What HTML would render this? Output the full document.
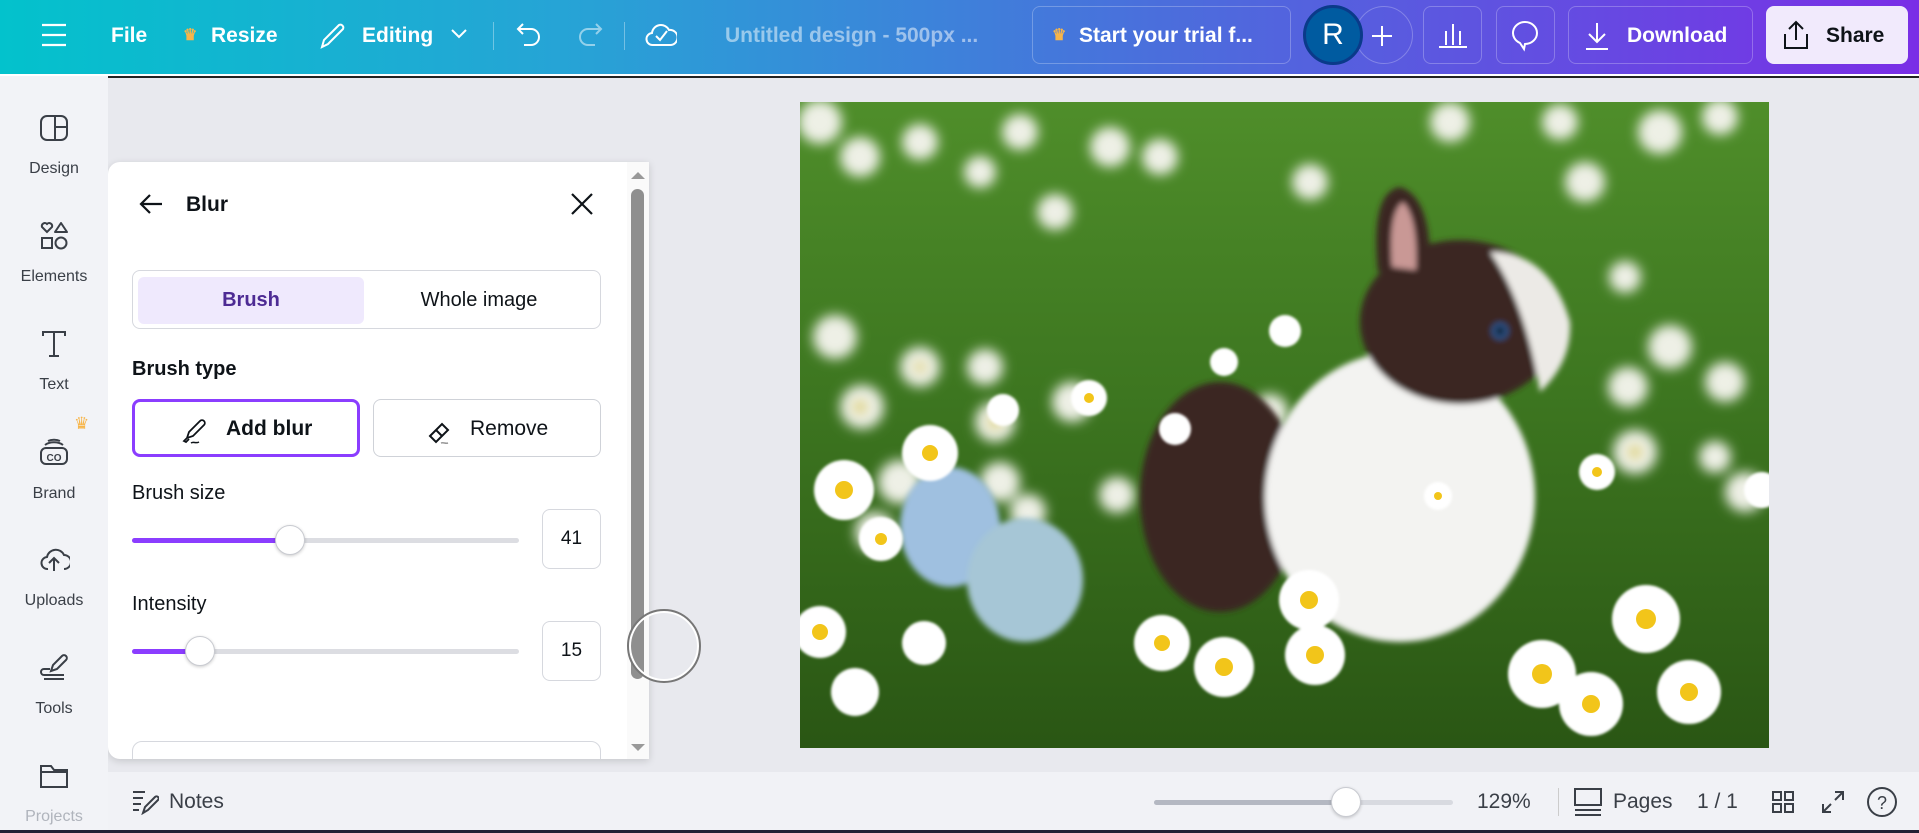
<!DOCTYPE html>
<html><head><meta charset="utf-8"><style>
*{box-sizing:border-box;margin:0;padding:0}
html{overflow:hidden}
body{width:1919px;height:833px;overflow:hidden;font-family:"Liberation Sans",sans-serif;background:#e8e9ee;position:relative;color:#0e1318}
.abs{position:absolute}
.top{left:0;top:0;width:1919px;height:74px;background:linear-gradient(90deg,#03c2cc 0%,#27a3d6 30%,#4a6fdc 60%,#7a2ee6 100%);color:#fff}
.tt{position:absolute;top:23px;font-size:21px;font-weight:bold;line-height:26px}
.tbtn{position:absolute;top:6px;height:58px;border:1px solid rgba(255,255,255,.25);border-radius:8px}
.side{left:0;top:76px;width:108px;height:754px;background:#f2f3f7;z-index:3;overflow:hidden}
.sl{position:absolute;left:0;width:108px;text-align:center;font-size:16px;color:#3a3f47}
.si{position:absolute;left:38px;width:32px;height:32px}
.panel{left:108px;top:162px;width:541px;height:597px;background:#fff;border-radius:12px 0 0 12px;box-shadow:0 2px 8px rgba(0,0,0,.15);overflow:hidden}
.bottom{left:0;top:772px;width:1919px;height:58px;background:#f1f2f6}
</style></head><body>
<div class="abs top">
<svg class="abs" style="left:40px;top:22px" width="28" height="26"><path d="M2 3h24M2 13h24M2 23h24" stroke="#fff" stroke-width="2.2"/></svg>
<div class="tt" style="left:111px">File</div>
<div class="tt" style="left:183px;color:#f7b54a;font-size:16px">♛</div>
<div class="tt" style="left:211px">Resize</div>
<svg class="abs" style="left:318px;top:20px" width="30" height="30"><path d="M4 27l2-7L21 5a3 3 0 014 4L10 24z" fill="none" stroke="#fff" stroke-width="2"/></svg>
<div class="tt" style="left:362px">Editing</div>
<svg class="abs" style="left:450px;top:28px" width="18" height="12"><path d="M2 2l7 7 7-7" fill="none" stroke="#fff" stroke-width="2"/></svg>
<div class="abs" style="left:493px;top:22px;width:1px;height:28px;background:rgba(255,255,255,.35)"></div>
<svg class="abs" style="left:514px;top:20px" width="30" height="30"><path d="M9 4L4 9l5 5M4 9h13a8 8 0 010 16h-7" fill="none" stroke="#fff" stroke-width="2"/></svg>
<svg class="abs" style="left:575px;top:20px" width="30" height="30"><path d="M21 4l5 5-5 5M26 9H13a8 8 0 000 16h7" fill="none" stroke="rgba(255,255,255,.5)" stroke-width="2"/></svg>
<div class="abs" style="left:624px;top:22px;width:1px;height:28px;background:rgba(255,255,255,.35)"></div>
<svg class="abs" style="left:645px;top:18px" width="32" height="32"><path d="M8 27a6 6 0 01-1-12 9 9 0 0117-3 7 7 0 012 15z" fill="none" stroke="#fff" stroke-width="2"/><path d="M11 18l4 4 7-9" fill="none" stroke="#fff" stroke-width="2"/></svg>
<div class="tt" style="left:725px;font-weight:bold;color:rgba(255,255,255,.5)">Untitled design - 500px ...</div>
<div class="tbtn" style="left:1032px;width:259px"></div>
<div class="tt" style="left:1052px;color:#f7b54a;font-size:16px">♛</div>
<div class="tt" style="left:1079px">Start your trial f...</div>
<div class="abs" style="left:1355px;top:6px;width:58px;height:58px;border:1px solid rgba(255,255,255,.25);border-radius:50%"></div>
<svg class="abs" style="left:1370px;top:24px" width="24" height="24"><path d="M12 2v20M2 12h20" stroke="#fff" stroke-width="2"/></svg>
<div class="abs" style="left:1303px;top:5px;width:60px;height:60px;border-radius:50%;background:#005ba0;border:3px solid #0a3a8a;text-align:center;line-height:54px;font-size:30px">R</div>
<div class="tbtn" style="left:1423px;width:59px"></div>
<svg class="abs" style="left:1437px;top:20px" width="32" height="30"><path d="M2 27h28M9 25V11M16 25V4M23 25V11" stroke="#fff" stroke-width="2"/></svg>
<div class="tbtn" style="left:1496px;width:59px"></div>
<svg class="abs" style="left:1509px;top:19px" width="32" height="34"><path d="M16 3a12 11 0 00-5 21l4 6 1-5a12 11 0 000-22z" fill="none" stroke="#fff" stroke-width="2"/></svg>
<div class="tbtn" style="left:1568px;width:185px"></div>
<svg class="abs" style="left:1582px;top:20px" width="30" height="32"><path d="M15 3v19M7 14l8 8 8-8M4 29h22" fill="none" stroke="#fff" stroke-width="2"/></svg>
<div class="tt" style="left:1627px">Download</div>
<div class="abs" style="left:1766px;top:6px;width:142px;height:58px;background:#f1eafc;border-radius:8px"></div>
<svg class="abs" style="left:1781px;top:19px" width="30" height="32"><path d="M15 21V3M8 10l7-7 7 7M4 15v14h22V15" fill="none" stroke="#0e1318" stroke-width="2"/></svg>
<div class="tt" style="left:1826px;color:#0e1318">Share</div>
</div>
<div class="abs" style="left:0;top:74px;width:1919px;height:2px;background:#fff"></div>
<div class="abs" style="left:0;top:76px;width:1919px;height:2px;background:#222"></div>

<div class="abs side">
<svg class="si" style="top:36px" viewBox="0 0 32 32"><rect x="3" y="4" width="26" height="24" rx="6" fill="none" stroke="#3a3f47" stroke-width="2"/><path d="M17 4v24M17 15h12" stroke="#3a3f47" stroke-width="2"/></svg>
<div class="sl" style="top:84px">Design</div>
<svg class="si" style="top:144px" viewBox="0 0 32 32"><path d="M9 12l-5-5a3 3 0 015-3 3 3 0 015 3z" fill="none" stroke="#3a3f47" stroke-width="2"/><path d="M23 3l6 9H17z" fill="none" stroke="#3a3f47" stroke-width="2" stroke-linejoin="round"/><rect x="4" y="18" width="10" height="10" fill="none" stroke="#3a3f47" stroke-width="2"/><circle cx="23" cy="23" r="5.5" fill="none" stroke="#3a3f47" stroke-width="2"/></svg>
<div class="sl" style="top:192px">Elements</div>
<svg class="si" style="top:252px" viewBox="0 0 32 32"><path d="M5 8V4h22v4M16 4v24M11 28h10" fill="none" stroke="#3a3f47" stroke-width="2"/></svg>
<div class="sl" style="top:300px">Text</div>
<div class="abs" style="left:74px;top:338px;color:#f7b54a;font-size:17px">♛</div>
<svg class="si" style="top:360px" viewBox="0 0 32 32"><rect x="3" y="12" width="26" height="16" rx="5" fill="none" stroke="#3a3f47" stroke-width="2"/><path d="M7 9a12 8 0 0118 0M10 5a9 5 0 0112 0" fill="none" stroke="#3a3f47" stroke-width="2"/><text x="16" y="25" font-size="10" text-anchor="middle" font-family="Liberation Sans" font-weight="bold" fill="#3a3f47">CO</text></svg>
<div class="sl" style="top:409px">Brand</div>
<svg class="si" style="top:467px" viewBox="0 0 32 32"><path d="M10 26a6 6 0 01-1-12 9 9 0 0117-2 7 7 0 010 14" fill="none" stroke="#3a3f47" stroke-width="2"/><path d="M16 28V16M11 20l5-5 5 5" fill="none" stroke="#3a3f47" stroke-width="2"/></svg>
<div class="sl" style="top:516px">Uploads</div>
<svg class="si" style="top:575px" viewBox="0 0 32 32"><path d="M13 20l2-6 9-9a2.5 2.5 0 014 4l-9 9z" fill="none" stroke="#3a3f47" stroke-width="2"/><path d="M12 18H6a3 3 0 000 6h20M6 28h20" fill="none" stroke="#3a3f47" stroke-width="2"/></svg>
<div class="sl" style="top:624px">Tools</div>
<svg class="si" style="top:683px" viewBox="0 0 32 32"><path d="M3 7h10l3 4h13v17H3z" fill="none" stroke="#3a3f47" stroke-width="2"/><path d="M3 13h26" stroke="#3a3f47" stroke-width="2"/></svg>
<div class="sl" style="top:732px;color:#b0b4bc">Projects</div>
</div>

<div class="abs panel">
<svg class="abs" style="left:30px;top:30px" width="26" height="24"><path d="M24 12H3M12 3l-9 9 9 9" fill="none" stroke="#0e1318" stroke-width="2.2"/></svg>
<div class="abs" style="left:78px;top:31px;font-size:21px;font-weight:bold">Blur</div>
<svg class="abs" style="left:462px;top:30px" width="24" height="24"><path d="M2 2l20 20M22 2L2 22" stroke="#0e1318" stroke-width="2.2"/></svg>
<div class="abs" style="left:24px;top:108px;width:469px;height:59px;border:1px solid #d6d8de;border-radius:8px"></div>
<div class="abs" style="left:30px;top:115px;width:226px;height:47px;background:#efe9fd;border-radius:6px;text-align:center;line-height:47px;font-size:20px;font-weight:bold;color:#4d2b94">Brush</div>
<div class="abs" style="left:256px;top:115px;width:230px;height:47px;text-align:center;line-height:47px;font-size:20px">Whole image</div>
<div class="abs" style="left:24px;top:196px;font-size:20px;font-weight:bold">Brush type</div>
<div class="abs" style="left:24px;top:237px;width:228px;height:58px;border:3px solid #8b3dff;border-radius:8px"></div>
<svg class="abs" style="left:73px;top:254px" width="30" height="30"><path d="M6 22l2-6 11-11a2.5 2.5 0 014 4L12 20z M6 22l-3 3 2 1 3-3" fill="none" stroke="#0e1318" stroke-width="1.8"/><path d="M10 27c3-2 4 1 8-1" fill="none" stroke="#0e1318" stroke-width="1.5"/></svg>
<div class="abs" style="left:118px;top:255px;font-size:21px;font-weight:bold">Add blur</div>
<div class="abs" style="left:265px;top:237px;width:228px;height:58px;border:1px solid #cfd2d8;border-radius:8px"></div>
<svg class="abs" style="left:318px;top:254px" width="30" height="30"><path d="M4 20l12-12 6 6-12 12z M10 14l6 6" fill="none" stroke="#0e1318" stroke-width="2"/><path d="M15 27c3-1 4 1 7 0" stroke="#999" fill="none" stroke-width="1.5"/></svg>
<div class="abs" style="left:362px;top:255px;font-size:21px">Remove</div>
<div class="abs" style="left:24px;top:320px;font-size:20px">Brush size</div>
<div class="abs" style="left:24px;top:376px;width:387px;height:5px;background:#dcdde2;border-radius:3px"></div>
<div class="abs" style="left:24px;top:376px;width:158px;height:5px;background:#8b3dff;border-radius:3px"></div>
<div class="abs" style="left:167px;top:363px;width:30px;height:30px;border-radius:50%;background:#fff;border:1px solid #c9cbd1;box-shadow:0 1px 3px rgba(0,0,0,.2)"></div>
<div class="abs" style="left:434px;top:347px;width:59px;height:60px;border:1px solid #d6d8de;border-radius:8px;text-align:center;line-height:58px;font-size:19px">41</div>
<div class="abs" style="left:24px;top:431px;font-size:20px">Intensity</div>
<div class="abs" style="left:24px;top:487px;width:387px;height:5px;background:#dcdde2;border-radius:3px"></div>
<div class="abs" style="left:24px;top:487px;width:68px;height:5px;background:#8b3dff;border-radius:3px"></div>
<div class="abs" style="left:77px;top:474px;width:30px;height:30px;border-radius:50%;background:#fff;border:1px solid #c9cbd1;box-shadow:0 1px 3px rgba(0,0,0,.2)"></div>
<div class="abs" style="left:434px;top:459px;width:59px;height:60px;border:1px solid #d6d8de;border-radius:8px;text-align:center;line-height:58px;font-size:19px">15</div>
<div class="abs" style="left:24px;top:579px;width:469px;height:40px;border:1px solid #d6d8de;border-radius:10px"></div>
<div class="abs" style="left:519px;top:0;width:22px;height:597px;background:#fafafa"></div>
<div class="abs" style="left:523px;top:10px;width:0;height:0;border-left:7px solid transparent;border-right:7px solid transparent;border-bottom:7px solid #999"></div>
<div class="abs" style="left:523px;top:27px;width:13px;height:490px;background:#8f8f8f;border-radius:7px"></div>
<div class="abs" style="left:523px;top:582px;width:0;height:0;border-left:7px solid transparent;border-right:7px solid transparent;border-top:7px solid #999"></div>
</div>
<div class="abs" style="left:627px;top:609px;width:74px;height:74px;border-radius:50%;border:2px solid #777;box-shadow:inset 0 0 0 2px #fff"></div>

<svg class="abs" style="left:800px;top:102px" width="969" height="646" viewBox="0 0 969 646">
<defs>
<filter id="b6"><feGaussianBlur stdDeviation="6"/></filter>
<filter id="b3"><feGaussianBlur stdDeviation="3"/></filter>
<filter id="b1"><feGaussianBlur stdDeviation="1.2"/></filter>
<linearGradient id="g" x1="0" y1="0" x2="0" y2="1"><stop offset="0" stop-color="#4f8e2a"/><stop offset=".45" stop-color="#3d7620"/><stop offset="1" stop-color="#2a5614"/></linearGradient>
</defs>
<rect width="969" height="646" fill="url(#g)"/>
<g fill="#eef0e6" filter="url(#b6)">
<circle cx="20" cy="20" r="22"/><circle cx="60" cy="55" r="20"/><circle cx="120" cy="40" r="18"/><circle cx="180" cy="70" r="16"/><circle cx="220" cy="30" r="18"/><circle cx="310" cy="45" r="20"/><circle cx="360" cy="55" r="18"/><circle cx="255" cy="110" r="18"/><circle cx="510" cy="80" r="18"/><circle cx="650" cy="20" r="20"/><circle cx="760" cy="20" r="18"/><circle cx="785" cy="80" r="20"/><circle cx="860" cy="30" r="22"/><circle cx="920" cy="15" r="18"/><circle cx="825" cy="175" r="16"/>
<circle cx="35" cy="235" r="22"/><circle cx="62" cy="305" r="22"/><circle cx="120" cy="265" r="20"/><circle cx="185" cy="265" r="18"/><circle cx="195" cy="320" r="20"/><circle cx="272" cy="300" r="20"/><circle cx="100" cy="380" r="22"/><circle cx="140" cy="400" r="20"/><circle cx="200" cy="380" r="20"/><circle cx="228" cy="410" r="18"/><circle cx="75" cy="430" r="20"/><circle cx="317" cy="393" r="18"/><circle cx="440" cy="320" r="18"/><circle cx="470" cy="310" r="18"/>
<circle cx="870" cy="245" r="22"/><circle cx="925" cy="280" r="20"/><circle cx="828" cy="285" r="20"/><circle cx="835" cy="350" r="22"/><circle cx="945" cy="390" r="20"/><circle cx="915" cy="355" r="16"/>
</g>
<g filter="url(#b6)" fill="#d8c860"><circle cx="60" cy="305" r="6"/><circle cx="120" cy="265" r="5"/><circle cx="195" cy="320" r="6"/><circle cx="835" cy="350" r="6"/></g>
<g filter="url(#b3)">
<ellipse cx="420" cy="395" rx="80" ry="115" fill="#3a2620"/>
<ellipse cx="600" cy="395" rx="135" ry="145" fill="#f3f3f1"/>
<ellipse cx="660" cy="220" rx="100" ry="82" fill="#3b2520"/>
<path d="M578 170 Q570 90 600 85 Q632 95 630 170z" fill="#3b2520"/>
<path d="M592 165 Q588 110 603 100 Q618 115 616 168z" fill="#c99895"/>
<path d="M690 150 Q750 150 770 220 Q772 260 740 290 Q725 200 690 150z" fill="#eceae6"/>
<circle cx="700" cy="229" r="9" fill="#2c4f80"/><circle cx="700" cy="229" r="4" fill="#0c1a2a"/>
<ellipse cx="150" cy="425" rx="50" ry="60" fill="#9fc0e0"/>
<ellipse cx="225" cy="478" rx="58" ry="62" fill="#a6c6d6"/>
</g>
<g fill="#fff" filter="url(#b1)">
<circle cx="44" cy="388" r="30"/><circle cx="130" cy="351" r="28"/><circle cx="81" cy="437" r="22"/><circle cx="124" cy="541" r="22"/><circle cx="509" cy="498" r="30"/><circle cx="515" cy="553" r="30"/><circle cx="424" cy="565" r="30"/><circle cx="742" cy="572" r="34"/><circle cx="791" cy="602" r="32"/><circle cx="846" cy="517" r="34"/><circle cx="889" cy="590" r="32"/><circle cx="638" cy="394" r="14"/><circle cx="797" cy="370" r="18"/><circle cx="962" cy="388" r="18"/><circle cx="362" cy="541" r="28"/><circle cx="289" cy="296" r="18"/><circle cx="203" cy="308" r="16"/><circle cx="375" cy="327" r="16"/><circle cx="424" cy="260" r="14"/><circle cx="485" cy="229" r="16"/><circle cx="20" cy="530" r="26"/><circle cx="55" cy="590" r="24"/>
</g>
<g fill="#f2c51a">
<circle cx="44" cy="388" r="9"/><circle cx="130" cy="351" r="8"/><circle cx="81" cy="437" r="6"/><circle cx="509" cy="498" r="9"/><circle cx="515" cy="553" r="9"/><circle cx="424" cy="565" r="9"/><circle cx="742" cy="572" r="10"/><circle cx="791" cy="602" r="9"/><circle cx="846" cy="517" r="10"/><circle cx="889" cy="590" r="9"/><circle cx="638" cy="394" r="4"/><circle cx="797" cy="370" r="5"/><circle cx="362" cy="541" r="8"/><circle cx="289" cy="296" r="5"/><circle cx="20" cy="530" r="8"/>
</g>
</svg>

<div class="abs bottom">
<svg class="abs" style="left:131px;top:17px" width="28" height="26"><path d="M2 3h12M2 9h10M2 15h8M2 21h6" stroke="#3a3f47" stroke-width="2"/><path d="M12 24l2-6 10-10a2 2 0 013 3L17 21z" fill="none" stroke="#3a3f47" stroke-width="2"/></svg>
<div class="abs" style="left:169px;top:18px;font-size:21px;color:#3a3f47">Notes</div>
<div class="abs" style="left:1154px;top:28px;width:299px;height:5px;background:#d8dae0;border-radius:3px"></div>
<div class="abs" style="left:1154px;top:28px;width:192px;height:5px;background:#b4b8c2;border-radius:3px"></div>
<div class="abs" style="left:1331px;top:15px;width:30px;height:30px;border-radius:50%;background:#fff;border:1px solid #c9cbd1;box-shadow:0 1px 3px rgba(0,0,0,.2)"></div>
<div class="abs" style="left:1477px;top:18px;font-size:21px;color:#3a3f47">129%</div>
<div class="abs" style="left:1558px;top:16px;width:1px;height:28px;background:#ccc"></div>
<svg class="abs" style="left:1573px;top:15px" width="30" height="30"><rect x="2" y="2" width="26" height="16" fill="none" stroke="#3a3f47" stroke-width="2"/><path d="M2 23h26M2 28h26" stroke="#3a3f47" stroke-width="2"/></svg>
<div class="abs" style="left:1613px;top:18px;font-size:21px;color:#3a3f47">Pages</div>
<div class="abs" style="left:1697px;top:18px;font-size:21px;color:#3a3f47">1 / 1</div>
<svg class="abs" style="left:1771px;top:18px" width="24" height="24"><g fill="none" stroke="#3a3f47" stroke-width="2"><rect x="2" y="2" width="8" height="8"/><rect x="14" y="2" width="8" height="8"/><rect x="2" y="14" width="8" height="8"/><rect x="14" y="14" width="8" height="8"/></g></svg>
<svg class="abs" style="left:1820px;top:17px" width="26" height="26"><path d="M15 3h8v8M23 3l-8 8M11 23H3v-8M3 23l8-8" fill="none" stroke="#3a3f47" stroke-width="2"/></svg>
<svg class="abs" style="left:1866px;top:14px" width="32" height="32"><circle cx="16" cy="16" r="14" fill="none" stroke="#3a3f47" stroke-width="2"/><text x="16" y="23" font-size="18" text-anchor="middle" font-family="Liberation Sans" fill="#3a3f47">?</text></svg>
</div>
<div class="abs" style="left:0;top:830px;width:1919px;height:3px;background:#221f33"></div>
</body></html>
